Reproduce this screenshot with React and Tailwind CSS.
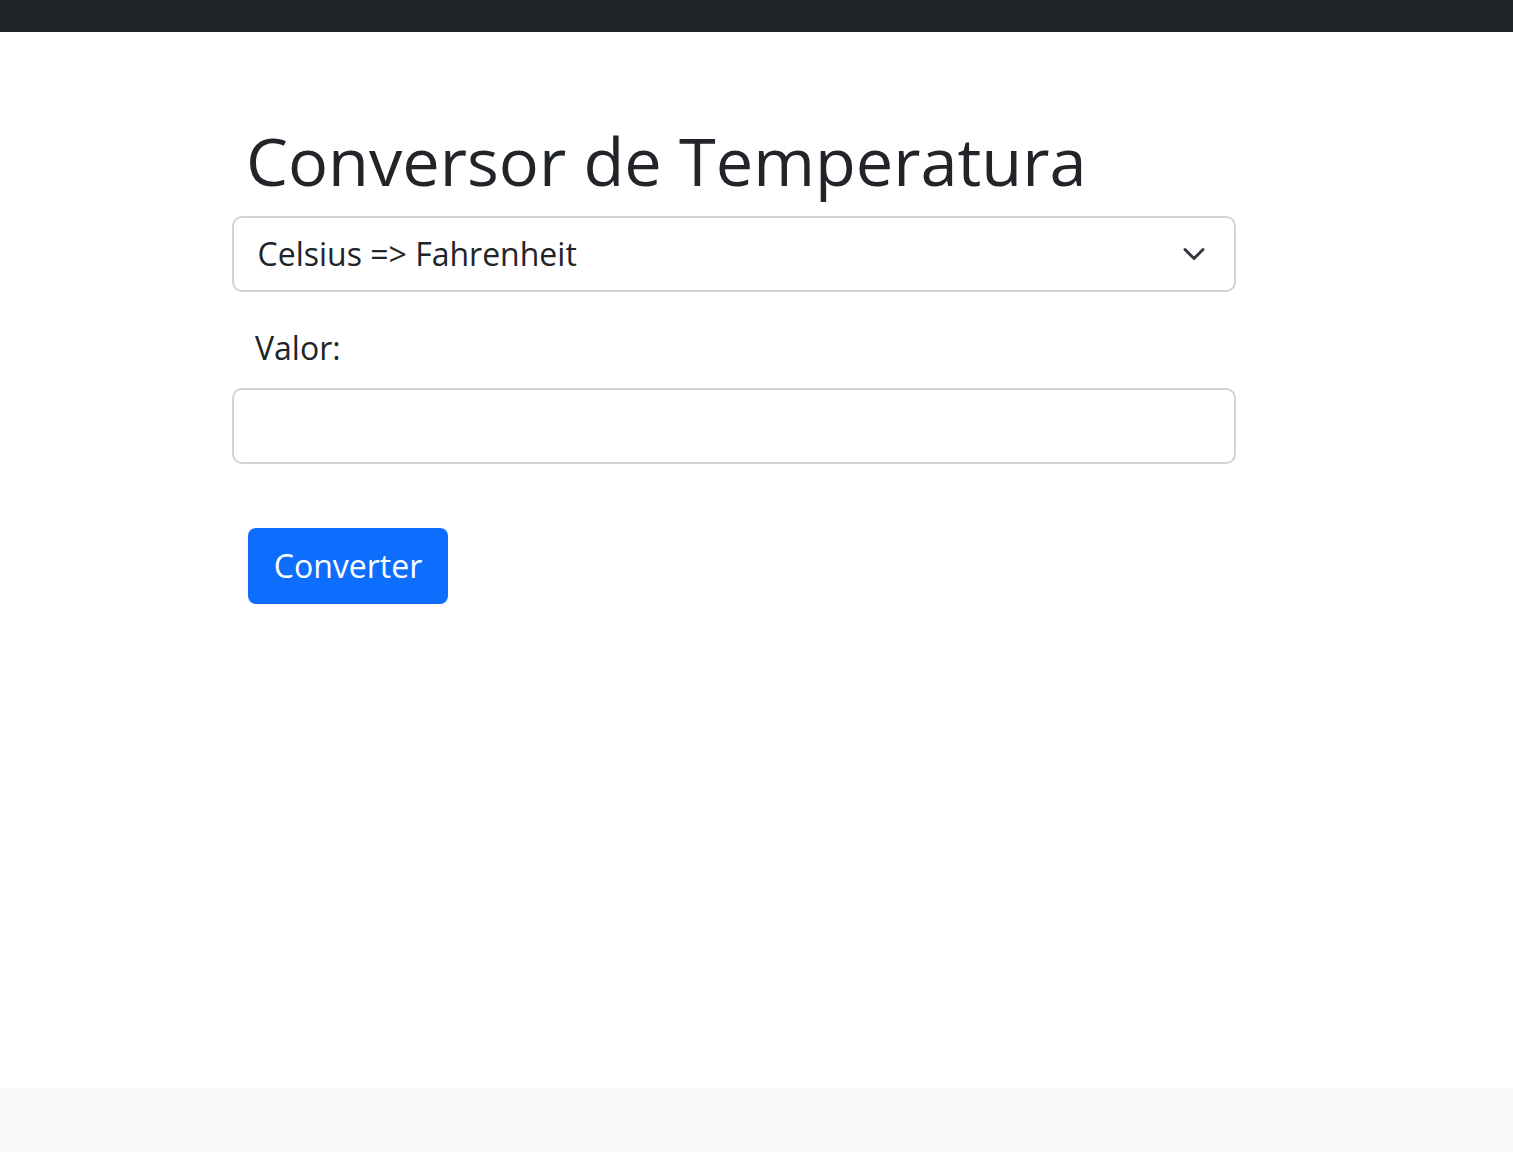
import React, { useState } from "react";

const App = () => {
  const [mode, setMode] = useState("cf");
  const [valor, setValor] = useState("");

  return (
    <div className="min-h-screen flex flex-col bg-white text-[#212529]" style={{ fontFamily: '"Open Sans", "Noto Sans", sans-serif' }}>
      <nav className="h-8 bg-[#212529]"></nav>

      <main className="flex-1 pt-[89px]">
        <div className="ml-[232px] w-[1004px]">
          <h1 className="ml-[14px] mb-[15px] text-[66.7px] leading-[1.2] font-normal">Conversor de Temperatura</h1>

          <div className="relative">
            <select
              value={mode}
              onChange={(e) => setMode(e.target.value)}
              className="appearance-none w-full h-[76px] pl-[23.5px] pr-20 text-[32px] leading-[1.5] border-2 border-[#ced4da] rounded-[10px] bg-white text-[#212529] outline-none"
            >
              <option value="cf">Celsius =&gt; Fahrenheit</option>
              <option value="fc">Fahrenheit =&gt; Celsius</option>
            </select>
            <svg
              className="pointer-events-none absolute right-[26px] top-1/2 -translate-y-1/2"
              width="32"
              height="24"
              viewBox="0 0 16 16"
              fill="none"
            >
              <path d="m2 5 6 6 6-6" stroke="#343a40" strokeWidth="2" strokeLinecap="round" strokeLinejoin="round" />
            </svg>
          </div>

          <label className="block mt-8 ml-[23px] text-[32px] leading-[1.5]">Valor:</label>

          <input
            type="number"
            value={valor}
            onChange={(e) => setValor(e.target.value)}
            className="block mt-4 w-full h-[76px] px-6 text-[32px] border-2 border-[#ced4da] rounded-[10px] outline-none"
          />

          <button className="mt-16 ml-4 h-[76px] w-[200px] bg-[#0d6efd] text-white text-[32px] leading-[1.5] rounded-[8px]">
            Converter
          </button>
        </div>
      </main>

      <footer className="h-16 bg-[#f8f9fa]"></footer>
    </div>
  );
};

export default App;
